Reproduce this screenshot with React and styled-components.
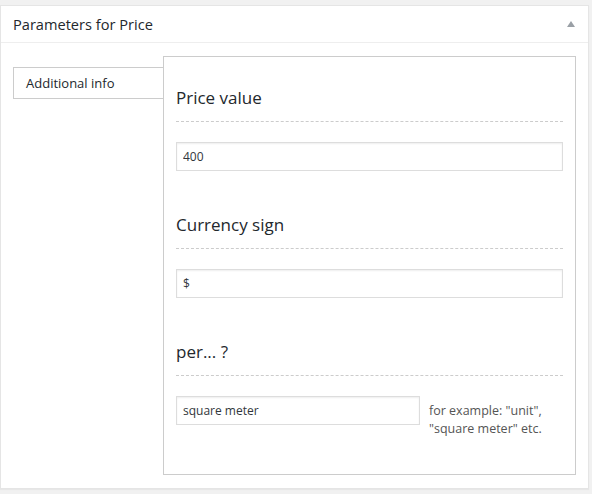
import React, { useState } from "react";
import styled, { createGlobalStyle } from "styled-components";

const GlobalStyle = createGlobalStyle`
  html, body {
    margin: 0;
    padding: 0;
    background: #f1f1f1;
  }
  body {
    font-family: "Open Sans", "Liberation Sans", sans-serif;
    color: #23282d;
  }
  * {
    box-sizing: border-box;
  }
`;

const fields = [
  { id: "price", label: "Price value", value: "400" },
  { id: "currency", label: "Currency sign", value: "$" },
  {
    id: "per",
    label: "per... ?",
    value: "square meter",
    short: true,
    help: ['for example: "unit",', '"square meter" etc.'],
  },
];

const App = () => {
  const [values, setValues] = useState(
    Object.fromEntries(fields.map((f) => [f.id, f.value]))
  );

  return (
    <Page>
      <GlobalStyle />
      <Postbox>
        <Header>
          <Title>Parameters for Price</Title>
          <Toggle aria-label="Toggle panel" />
        </Header>
        <Inside>
          <Tabs>
            <Tab>Additional info</Tab>
          </Tabs>
          <Panel>
            {fields.map((f) => (
              <Field key={f.id}>
                <FieldTitle>{f.label}</FieldTitle>
                <Row>
                  <Input
                    $short={f.short}
                    value={values[f.id]}
                    onChange={(e) =>
                      setValues({ ...values, [f.id]: e.target.value })
                    }
                  />
                  {f.help && (
                    <Help>
                      {f.help.map((line) => (
                        <div key={line}>{line}</div>
                      ))}
                    </Help>
                  )}
                </Row>
              </Field>
            ))}
          </Panel>
        </Inside>
      </Postbox>
    </Page>
  );
};

const Page = styled.div`
  padding-top: 5px;
  width: 592px;
  height: 494px;
`;

const Postbox = styled.div`
  width: 589px;
  height: 484px;
  background: #fff;
  border: 1px solid #e5e5e5;
  box-shadow: 0 1px 1px rgba(0, 0, 0, 0.04);
`;

const Header = styled.div`
  display: flex;
  align-items: center;
  justify-content: space-between;
  height: 37px;
  padding: 0 12px;
  border-bottom: 1px solid #eee;
`;

const Title = styled.h2`
  margin: 0;
  font-size: 14.6px;
  font-weight: 400;
  line-height: 1.4;
  color: #23282d;
`;

const Toggle = styled.span`
  width: 0;
  height: 0;
  margin-right: 1px;
  border-left: 4px solid transparent;
  border-right: 4px solid transparent;
  border-bottom: 6px solid #9aa0a6;
`;

const Inside = styled.div`
  display: flex;
  padding: 13px 12px;
`;

const Tabs = styled.ul`
  list-style: none;
  margin: 11px 0 0;
  padding: 0;
  width: 150px;
  flex-shrink: 0;
`;

const Tab = styled.li`
  height: 32px;
  padding: 0 12px;
  font-size: 13px;
  line-height: 30px;
  color: #23282d;
  border: 1px solid #ccc;
  border-right: none;
  background: #fff;
`;

const Panel = styled.div`
  width: 413px;
  height: 419px;
  border: 1px solid #ccc;
  padding: 29px 12px 0;
`;

const Field = styled.div`
  margin-bottom: 42px;
`;

const FieldTitle = styled.h3`
  margin: 0 0 20px;
  padding-bottom: 11px;
  font-size: 17px;
  font-weight: 400;
  line-height: 24px;
  color: #23282d;
  border-bottom: 1px dashed #ccc;
`;

const Row = styled.div`
  display: flex;
  align-items: flex-start;
  gap: 9px;
`;

const Input = styled.input`
  width: ${(p) => (p.$short ? "244px" : "100%")};
  height: 29px;
  margin: 0;
  padding: 0 6px;
  font-family: "Open Sans", "Liberation Sans", sans-serif;
  font-size: 12px;
  color: #32373c;
  border: 1px solid #ddd;
  border-radius: 0;
  background: #fff;
  box-shadow: inset 0 1px 2px rgba(0, 0, 0, 0.07);
  outline: none;
`;

const Help = styled.div`
  padding-top: 6px;
  font-size: 12.5px;
  line-height: 18px;
  color: #555;
`;

export default App;
